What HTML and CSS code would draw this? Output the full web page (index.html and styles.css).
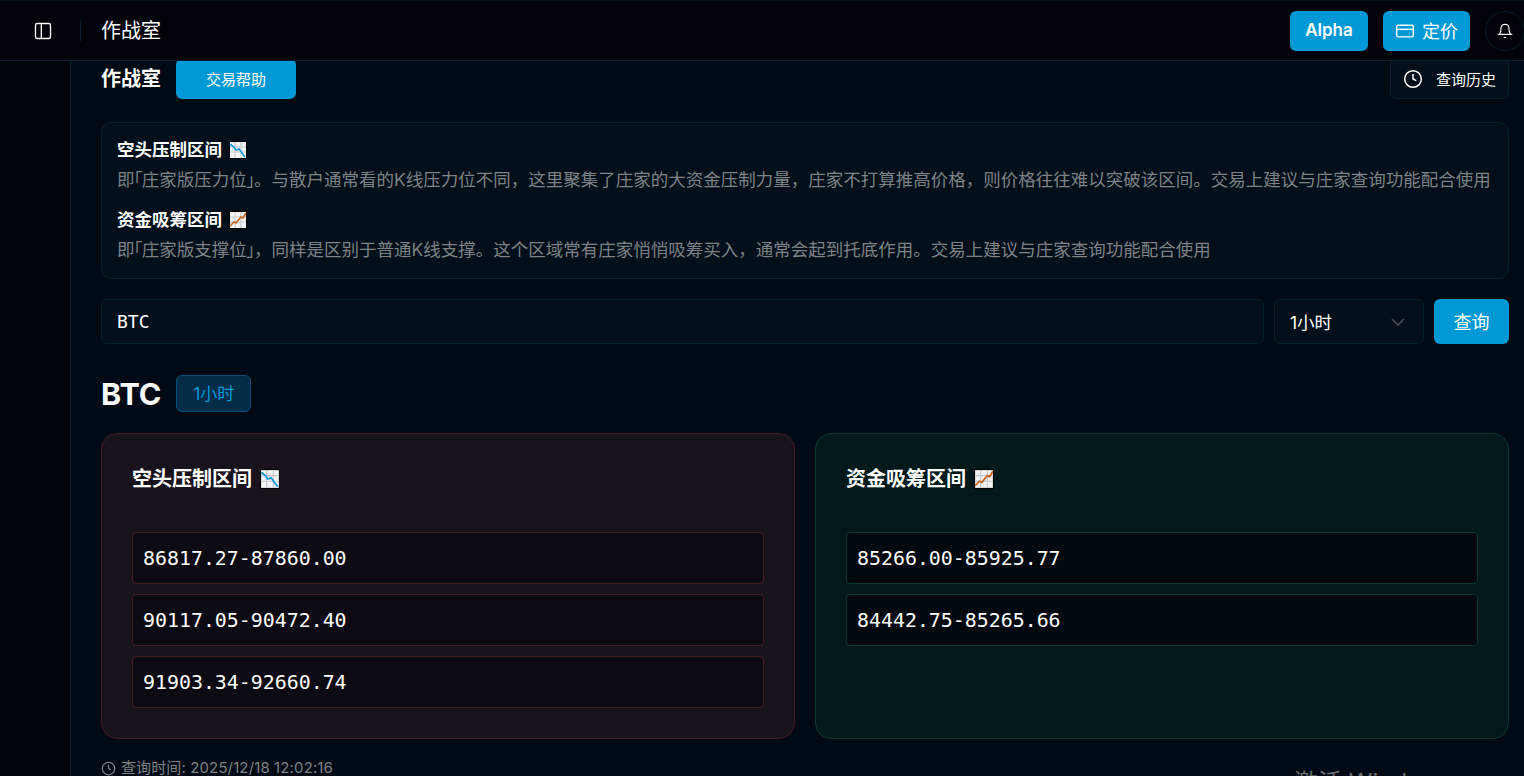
FILE: index.html
```html
<!DOCTYPE html>
<html lang="zh-CN">
<head>
<meta charset="utf-8">
<title>作战室</title>
<link rel="stylesheet" href="styles.css">
</head>
<body>
<svg class="defs" width="0" height="0" aria-hidden="true">
  <symbol id="chart-down" viewBox="0 0 18 18">
    <rect width="18" height="18" fill="#000"/>
    <rect x="1" y="1" width="16" height="16" fill="#f4f4f4"/>
    <path d="M1 6h16M1 11h16M6 1v16M12 1v16" stroke="#c4c8cc" stroke-width="1" fill="none"/>
    <path d="M1 3l4 3 2 3 3-1 6 8" stroke="#0f9ad8" stroke-width="1.6" fill="none"/>
  </symbol>
  <symbol id="chart-up" viewBox="0 0 18 18">
    <rect width="18" height="18" fill="#000"/>
    <rect x="1" y="1" width="16" height="16" fill="#f4f4f4"/>
    <path d="M1 6h16M1 11h16M6 1v16M12 1v16" stroke="#c4c8cc" stroke-width="1" fill="none"/>
    <path d="M1 15l4-4 2 1 5-6 2 1 3-5" stroke="#c8641e" stroke-width="1.6" fill="none"/>
  </symbol>
</svg>
<header class="topbar">
  <div class="topbar-left">
    <svg class="ico-panel" viewBox="0 0 24 24" fill="none" stroke="currentColor" stroke-width="1.6"><rect x="3" y="3" width="18" height="18" rx="2"/><path d="M10 3v18"/></svg>
    <span class="divider"></span>
    <span class="page-name">作战室</span>
  </div>
  <div class="topbar-right">
    <button class="btn btn-alpha">Alpha</button>
    <button class="btn btn-price">
      <svg class="ico-card" viewBox="0 0 24 24" fill="none" stroke="currentColor" stroke-width="1.7"><rect x="2" y="5" width="20" height="14" rx="2"/><path d="M2 10h20"/></svg>
      定价
    </button>
    <button class="bell">
      <svg viewBox="0 0 24 24" fill="none" stroke="currentColor" stroke-width="1.7"><path d="M6 8a6 6 0 0 1 12 0c0 7 3 9 3 9H3s3-2 3-9"/><path d="M10.3 21a1.9 1.9 0 0 0 3.4 0"/></svg>
    </button>
  </div>
</header>
<div class="shell">
  <aside class="sidebar"></aside>
  <main class="main">
    <div class="head-row">
      <div class="head-left">
        <h1 class="head-title">作战室</h1>
        <button class="btn btn-help">交易帮助</button>
      </div>
      <button class="btn-history">
        <svg viewBox="0 0 24 24" fill="none" stroke="currentColor" stroke-width="1.8"><circle cx="12" cy="12" r="10"/><path d="M12 6v6l4 2"/></svg>
        查询历史
      </button>
    </div>

    <section class="info-card">
      <h3 class="info-title">空头压制区间 <svg class="emoji"><use href="#chart-down"/></svg></h3>
      <p class="info-text">即<span class="narrow">「</span>庄家版压力位<span class="narrow">」</span>。与散户通常看的K线压力位不同，这里聚集了庄家的大资金压制力量，庄家不打算推高价格，则价格往往难以突破该区间。交易上建议与庄家查询功能配合使用</p>
      <h3 class="info-title second">资金吸筹区间 <svg class="emoji"><use href="#chart-up"/></svg></h3>
      <p class="info-text">即<span class="narrow">「</span>庄家版支撑位<span class="narrow">」</span>，同样是区别于普通K线支撑。这个区域常有庄家悄悄吸筹买入，通常会起到托底作用。交易上建议与庄家查询功能配合使用</p>
    </section>

    <form class="query-row">
      <div class="field field-symbol">BTC</div>
      <div class="field field-select">
        <span>1小时</span>
        <svg viewBox="0 0 24 24" fill="none" stroke="currentColor" stroke-width="1.6"><path d="M6 9l6 6 6-6"/></svg>
      </div>
      <button class="btn btn-query" type="button">查询</button>
    </form>

    <div class="result-head">
      <h2 class="result-symbol">BTC</h2>
      <span class="pill">1小时</span>
    </div>

    <div class="zones">
      <section class="zone zone-red">
        <h3 class="zone-title">空头压制区间 <svg class="emoji"><use href="#chart-down"/></svg></h3>
        <div class="zone-list">
          <div class="zone-row">86817.27-87860.00</div>
          <div class="zone-row">90117.05-90472.40</div>
          <div class="zone-row">91903.34-92660.74</div>
        </div>
      </section>
      <section class="zone zone-green">
        <h3 class="zone-title">资金吸筹区间 <svg class="emoji"><use href="#chart-up"/></svg></h3>
        <div class="zone-list">
          <div class="zone-row">85266.00-85925.77</div>
          <div class="zone-row">84442.75-85265.66</div>
        </div>
      </section>
    </div>

    <div class="query-time">
      <svg viewBox="0 0 24 24" fill="none" stroke="currentColor" stroke-width="2"><circle cx="12" cy="12" r="10"/><path d="M12 6v6l4 2"/></svg>
      查询时间: 2025/12/18 12:02:16
    </div>
  </main>
</div>
<div class="watermark">激活 Windows</div>
</body>
</html>
```

FILE: styles.css
```css
* { box-sizing: border-box; }
html, body { margin: 0; height: 100%; }
body {
  height: 776px;
  overflow: hidden;
  display: flex;
  flex-direction: column;
  background: #000a14;
  color: #fff;
  font-family: Inter, "Noto Sans CJK SC", sans-serif;
  position: relative;
}
.defs { position: absolute; }
button { font-family: inherit; cursor: pointer; border: 0; color: inherit; padding: 0; }
h1, h2, h3, p { margin: 0; }

.topbar {
  flex: 0 0 61px;
  position: relative;
  z-index: 2;
  display: flex;
  align-items: center;
  justify-content: space-between;
  background: #000309;
  border-top: 1px solid #03101a;
  border-bottom: 1px solid #04202e;
}
.topbar-left { display: flex; align-items: center; padding-left: 33px; }
.ico-panel { width: 20px; height: 20px; color: #fff; margin-right: 27px; }
.divider { width: 1px; height: 20px; background: #04202e; margin-right: 20px; }
.page-name { font-size: 20px; line-height: 28px; }
.topbar-right { display: flex; align-items: center; width: 234px; gap: 15px; flex: none; overflow: hidden; }

.btn {
  background: #0099d6;
  color: #fff;
  border-radius: 6px;
  display: inline-flex;
  align-items: center;
  justify-content: center;
  padding-bottom: 2px;
}
.btn-alpha { width: 78px; height: 40px; flex: none; font-size: 17px; font-weight: 600; padding-bottom: 1px; }
.btn-price { width: 87px; height: 40px; flex: none; font-size: 18px; gap: 7px; }
.ico-card { width: 20px; height: 20px; margin-top: 2px; }
.bell {
  width: 40px;
  height: 40px;
  flex: none;
  border-radius: 50%;
  background: transparent;
  border: 1px solid #04202e;
  display: flex;
  align-items: center;
  justify-content: center;
}
.bell svg { width: 16px; height: 16px; }

.shell { flex: 1; display: flex; min-height: 0; }
.sidebar { flex: 0 0 71px; background: #00040b; border-right: 1px solid #04202e; }
.main { flex: 1; min-width: 0; padding: 0 15px 0 30px; overflow: hidden; }

.head-row { display: flex; align-items: center; justify-content: space-between; height: 40px; margin-top: -2px; }
.head-left { display: flex; align-items: center; gap: 15px; }
.head-title { font-size: 20px; font-weight: 700; line-height: 28px; }
.btn-help { width: 120px; height: 40px; font-size: 15px; }
.btn-history {
  width: 119px;
  height: 40px;
  background: #000f19;
  border: 1px solid #04202e;
  border-radius: 6px;
  font-size: 15px;
  display: flex;
  align-items: center;
  justify-content: center;
  gap: 13px;
  padding-bottom: 2px;
}
.btn-history svg { width: 20px; height: 20px; margin-top: 2px; }

.info-card {
  margin-top: 23px;
  height: 157px;
  padding: 15px;
  background: #000f19;
  border: 1px solid #04202e;
  border-radius: 10px;
}
.info-title { font-size: 17.5px; font-weight: 700; line-height: 24px; display: flex; align-items: center; gap: 7px; margin-bottom: 6px; }
.info-title.second { margin-top: 16px; }
.info-text { font-size: 17.5px; line-height: 24px; color: #7e8286; white-space: nowrap; }
.narrow { font-feature-settings: "halt"; margin: 0 -0.75px; }
.emoji { width: 18px; height: 18px; flex: none; }

.query-row { display: flex; gap: 10px; margin-top: 20px; height: 45px; }
.field {
  background: #000f19;
  border: 1px solid #04202e;
  border-radius: 6px;
  display: flex;
  align-items: center;
  font-size: 17.5px;
}
.field-symbol { flex: 1; padding: 0 15px; font-family: "DejaVu Sans Mono", monospace; font-size: 18px; }
.field-select { flex: 0 0 150px; padding: 0 13px 0 15px; justify-content: space-between; }
.field-select svg { width: 24px; height: 24px; color: #4a4e52; }
.btn-query { flex: 0 0 75px; font-size: 18px; }

.result-head { display: flex; align-items: center; gap: 15px; margin-top: 31px; height: 37px; }
.result-symbol { font-size: 30.5px; font-weight: 700; line-height: 37px; }
.pill {
  width: 75px;
  height: 37px;
  background: #032c48;
  border: 1px solid #06507a;
  border-radius: 6px;
  color: #0099d6;
  font-size: 17px;
  padding-bottom: 2px;
  display: flex;
  align-items: center;
  justify-content: center;
}

.zones { display: grid; grid-template-columns: 1fr 1fr; gap: 20px; margin-top: 21px; }
.zone { height: 306px; padding: 30px; border-radius: 16px; border: 1px solid; }
.zone-red { background: #18121c; border-color: #451c22; }
.zone-green { background: #02191b; border-color: #07392b; }
.zone-title { font-size: 20px; font-weight: 700; line-height: 30px; display: flex; align-items: center; gap: 8px; }
.zone-title .emoji { width: 20px; height: 20px; }
.zone-list { display: flex; flex-direction: column; gap: 10px; margin-top: 38px; }
.zone-row {
  height: 52px;
  padding: 0 10px;
  display: flex;
  align-items: center;
  border: 1px solid;
  border-radius: 4px;
  font-family: "DejaVu Sans Mono", monospace;
  font-size: 19.9px;
}
.zone-red .zone-row { background: #0c0a12; border-color: #451c22; }
.zone-green .zone-row { background: #01090e; border-color: #07392b; }

.query-time {
  display: flex;
  align-items: center;
  gap: 5px;
  margin-top: 19px;
  font-size: 15px;
  line-height: 20px;
  letter-spacing: 0.12px;
  color: #7e8286;
  white-space: nowrap;
}
.query-time svg { width: 15px; height: 15px; }

.watermark {
  position: absolute;
  left: 1294px;
  top: 766px;
  font-size: 24px;
  line-height: 34px;
  color: #6a6d70;
  white-space: nowrap;
}
```
